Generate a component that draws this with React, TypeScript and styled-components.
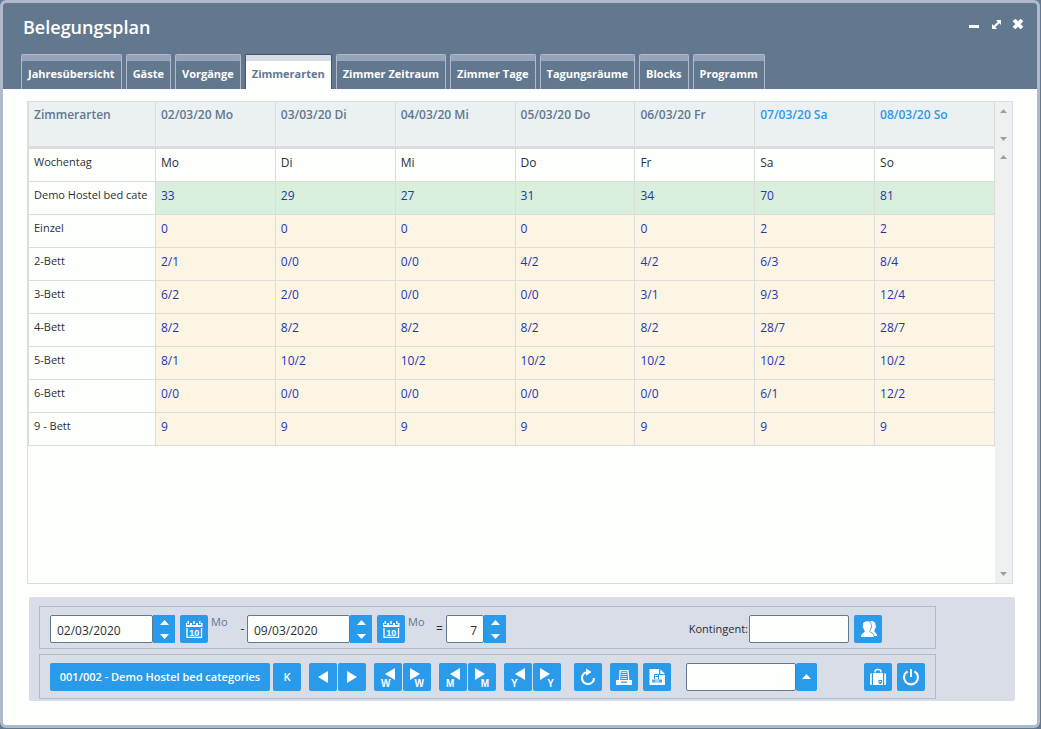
import React from "react";
import styled, { createGlobalStyle } from "styled-components";

const slate = "#62788f";
const frame = "#b1bacd";
const panel = "#d8dde8";
const blue = "#2a9aea";
const paper = "#fdfffd";
const line = "#dadddc";

const GlobalStyle = createGlobalStyle`
  *, *::before, *::after { box-sizing: border-box; }
  body {
    margin: 0;
    background: ${slate};
    font-family: "Trebuchet MS", "Open Sans", "Noto Sans", sans-serif;
    font-size: 12px;
    line-height: 18px;
    color: #2b2f36;
  }
  button, input, select { font: inherit; color: inherit; margin: 0; }
`;

const Window = styled.main`
  display: flex;
  flex-direction: column;
  min-height: calc(100vh - 1px);
  margin: 0 1px 1px 0;
  border: 3px solid ${frame};
  border-radius: 6px;
  background: ${paper};
`;

const Header = styled.header`
  background: ${slate};
  border-radius: 3px 3px 0 0;
`;

const TitleBar = styled.div`
  display: flex;
  justify-content: space-between;
  align-items: flex-start;
  height: 51px;
  padding: 12px 11px 0 20px;
`;

const Title = styled.h1`
  margin: 0;
  font-size: 18px;
  line-height: 24px;
  font-weight: 600;
  color: #fff;
`;

const WindowControls = styled.div`
  display: flex;
  gap: 6px;
`;

const ControlButton = styled.button`
  display: flex;
  width: 16px;
  height: 18px;
  padding: 0;
  border: 0;
  background: none;
  color: #fff;
`;

const Tabs = styled.nav`
  display: flex;
  gap: 4px;
  padding-left: 18px;
`;

const Tab = styled.a<{ $active?: boolean }>`
  display: block;
  height: 35px;
  padding: 4px 6px 0;
  border: 1px solid ${(p) => (p.$active ? "#46566a" : frame)};
  border-bottom: 0;
  border-radius: 2px 2px 0 0;
  background: ${(p) => (p.$active ? paper : slate)};
  box-shadow: inset 0 6px 0 ${(p) => (p.$active ? panel : "#97a3b8")};
  color: ${(p) => (p.$active ? slate : "#fff")};
  font-size: 11px;
  font-weight: 700;
  line-height: 30px;
  text-decoration: none;
  white-space: nowrap;
`;

const GridFrame = styled.section`
  display: flex;
  flex: 1;
  min-height: 483px;
  margin: 12px 24px 13px;
  border: 1px solid ${panel};
`;

const GridArea = styled.div`
  flex: 1;
  min-width: 0;
`;

const Table = styled.table`
  width: 100%;
  table-layout: fixed;
  border-collapse: separate;
  border-spacing: 0;
`;

const HeadCell = styled.th<{ $first?: boolean; $weekend?: boolean }>`
  width: ${(p) => (p.$first ? "128px" : "auto")};
  height: 47px;
  padding: 4px 5px;
  border-right: 1px solid ${line};
  border-bottom: 3px solid ${line};
  border-left: ${(p) => (p.$first ? `1px solid ${line}` : "0")};
  background: #ebf0f3;
  color: ${(p) => (p.$weekend ? blue : slate)};
  font-weight: 600;
  text-align: left;
  vertical-align: top;
  white-space: nowrap;
`;

const RowHead = styled.th`
  height: 33px;
  padding: 4px 3px 4px 5px;
  border: 1px solid ${line};
  border-top: 0;
  font-size: 11px;
  font-weight: 400;
  text-align: left;
  vertical-align: top;
`;

const RowLabel = styled.span`
  display: block;
  overflow: hidden;
  white-space: nowrap;
`;

const tones = { plain: "transparent", green: "#daefdb", cream: "#fdf5e3" };
type Tone = keyof typeof tones;

const Cell = styled.td<{ $tone: Tone }>`
  height: 33px;
  padding: 5px;
  border-right: 1px solid ${line};
  border-bottom: 1px solid ${line};
  background: ${(p) => tones[p.$tone]};
  color: ${(p) => (p.$tone === "plain" ? "inherit" : "#2335b5")};
  vertical-align: top;
`;

const Scrollers = styled.div`
  display: flex;
  flex-direction: column;
  width: 17px;
  background: #eff1f0;
`;

const Scroller = styled.div<{ $fill?: boolean }>`
  display: flex;
  flex-direction: column;
  justify-content: space-between;
  flex: ${(p) => (p.$fill ? "1" : "0 0 46px")};
`;

const ScrollButton = styled.button`
  display: grid;
  place-items: center;
  width: 17px;
  height: 18px;
  padding: 0;
  border: 0;
  background: none;
  color: #9da09f;
`;

const Footer = styled.footer`
  display: flex;
  flex-direction: column;
  gap: 5px;
  margin: 0 22px 24px 26px;
  padding: 9px 79px 2px 10px;
  border-radius: 2px;
  background: ${panel};
`;

const ToolRow = styled.form<{ $height: number; $top?: number }>`
  display: flex;
  align-items: center;
  height: ${(p) => p.$height}px;
  padding: ${(p) => p.$top ?? 0}px 10px 0;
  border: 1px solid ${frame};
  white-space: nowrap;
`;

const Cluster = styled.div<{ $gap?: number; $before?: number }>`
  display: flex;
  align-items: center;
  gap: ${(p) => p.$gap ?? 1}px;
  margin-left: ${(p) => p.$before ?? 0}px;
`;

const PushedCluster = styled(Cluster)<{ $after?: number }>`
  margin-left: auto;
  margin-right: ${(p) => p.$after ?? 0}px;
`;

const Field = styled.input<{ $width: number }>`
  width: ${(p) => p.$width}px;
  height: 28px;
  padding: 2px 6px 0;
  border: 1px solid ${slate};
  border-radius: 2px;
  background: ${paper};
`;

const NumberField = styled(Field)`
  text-align: right;
`;

const FieldLabel = styled.label`
  font-size: 11px;
`;

const Spinner = styled.span`
  display: flex;
  flex-direction: column;
  width: 22px;
  height: 28px;
`;

const SpinButton = styled.button`
  display: grid;
  place-items: center;
  flex: 1;
  padding: 0;
  border: 0;
  background: ${blue};
  color: #fff;
`;

const Button = styled.button<{ $width?: number }>`
  display: flex;
  align-items: center;
  justify-content: center;
  flex: none;
  width: ${(p) => p.$width ?? 28}px;
  height: 28px;
  padding: 0;
  border: 0;
  border-radius: 2px;
  background: ${blue};
  color: #fff;
  font-size: 11px;
  font-weight: 600;
`;

const Weekday = styled.span`
  align-self: flex-start;
  width: 30px;
  padding: 3px 0 0 3px;
  color: ${slate};
  font-size: 11px;
`;

const Sign = styled.span`
  width: 9px;
  text-align: center;
`;

const Group = styled.span`
  display: flex;
`;

const Triangle = ({ down, w = 9 }: { down?: boolean; w?: number }) => (
  <svg width={w} height={w > 8 ? 5 : 4} viewBox="0 0 10 5" preserveAspectRatio="none" aria-hidden="true">
    <path d={down ? "M0 0H10L5 5Z" : "M0 5H10L5 0Z"} fill="currentColor" />
  </svg>
);

const Icon = ({ children }: { children: React.ReactNode }) => (
  <svg width="28" height="28" viewBox="0 0 28 28" fill="currentColor" aria-hidden="true">
    {children}
  </svg>
);

const CalendarIcon = () => (
  <Icon>
    <path d="M6 8h1v2h3V8h2v2h4V8h2v2h3V8h1.500v4H6z" />
    <path d="M7.500 6h1.500v3H7.500zM13.200 6h1.500v3h-1.500zM19 6h1.500v3H19z" />
    <path d="M7 13V22.300H21.500V13" fill="none" stroke="currentColor" strokeWidth="1.300" />
    <text x="14.200" y="20.500" fontSize="9" fontWeight="700" textAnchor="middle" fontFamily="Liberation Sans, sans-serif">10</text>
  </Icon>
);

const ArrowIcon = ({ back, letter }: { back?: boolean; letter?: string }) => {
  const x = letter ? (back ? 11 : 7) : 9;
  const y = letter ? 5 : 8;
  return (
    <Icon>
      <path d={back ? `M${x + 10} ${y}v12l-10-6z` : `M${x} ${y}v12l10-6z`} />
      {letter && (
        <text x={back ? 7 : 21} y="24" textAnchor={back ? "start" : "end"} fontSize="10" fontWeight="700" fontFamily="Liberation Sans, sans-serif">
          {letter}
        </text>
      )}
    </Icon>
  );
};

const ReloadIcon = () => (
  <Icon>
    <path d="M12.500 9.200A6 6 0 1 0 20 15" fill="none" stroke="currentColor" strokeWidth="2.200" />
    <path d="M12 5.500L17.500 9L12 12.800z" />
  </Icon>
);

const PrinterIcon = () => (
  <Icon>
    <path d="M9.500 17L10.200 7.600H18L18.700 17" fill="none" stroke="currentColor" strokeWidth="1.300" />
    <path d="M11.500 9.500h5.200M11.500 11.500h5.200M11.300 13.500h5.600M11 15.500h6" stroke="currentColor" strokeWidth="1" opacity=".8" />
    <path fillRule="evenodd" d="M6 17h16v4q0 1-1 1H7q-1 0-1-1zM11 18.500v1.300h6v-1.300z" />
  </Icon>
);

const PrintPageIcon = () => (
  <Icon>
    <path d="M6.500 6H16V12h6v10H6.500z" />
    <path d="M17.300 6.300L22 11H17.300z" />
    <path d="M11.500 16V11.500h4V16" fill="none" stroke={blue} strokeWidth="1" />
    <path d="M12.500 13.500h3" stroke={blue} />
    <path d="M9 16.500h10v3H9z" fill={blue} opacity=".85" />
    <path d="M12 18h4" stroke="currentColor" />
  </Icon>
);

const PeopleIcon = () => (
  <Icon>
    <path d="M15 6.200C18.500 5.200 22 6.500 21.500 10.500C22.500 11.500 21.700 13 21 13.500C20.800 15 20.300 15.500 20.300 16.300C20.500 18 23 17.500 23 21H16z" />
    <path
      d="M12.500 6.200C15.500 6 17.200 7.500 17 10.500C17.900 11.200 17.300 12.800 16.500 13.300C16.200 14.700 15.700 15.300 15.300 16C15.500 18.300 20 17.800 19.800 22H7C7 18 10.700 18.300 10.800 16C10.200 15.300 9.700 14.500 9.500 13.300C8.500 12.500 8.300 11.300 9 10.500C8.700 8 9.800 6.500 12.500 6.200z"
      stroke={blue}
      strokeWidth="1.400"
      paintOrder="stroke"
    />
  </Icon>
);

const SuitcaseIcon = () => (
  <Icon>
    <path d="M11 9.500V8.500Q11 6.500 14 6.500T17 8.500V9.500" fill="none" stroke="currentColor" strokeWidth="1.400" />
    <path d="M6 10.500h1.800V22H7Q6 22 6 21zM9 10h10v12H9zM20.200 10.500H22V21q0 1-1 1h-.8z" />
    <path d="M14.500 17h3.500v2q0 1.800-1.800 2q-1.700-.2-1.700-2z" fill={blue} />
    <path d="M15.500 18.500h1.500" stroke="currentColor" />
  </Icon>
);

const PowerIcon = () => (
  <Icon>
    <path d="M10.500 8.300A7 7 0 1 0 17.500 8.300" fill="none" stroke="currentColor" strokeWidth="2.100" />
    <path d="M13 6h2v8h-2z" />
  </Icon>
);

const tabs = [
  "Jahresübersicht", "Gäste", "Vorgänge", "Zimmerarten", "Zimmer Zeitraum",
  "Zimmer Tage", "Tagungsräume", "Blocks", "Programm",
];

const days = ["02/03/20 Mo", "03/03/20 Di", "04/03/20 Mi", "05/03/20 Do", "06/03/20 Fr", "07/03/20 Sa", "08/03/20 So"];

const rows: { label: string; tone: Tone; values: string[] }[] = [
  { label: "Wochentag", tone: "plain", values: ["Mo", "Di", "Mi", "Do", "Fr", "Sa", "So"] },
  { label: "Demo Hostel bed cate", tone: "green", values: ["33", "29", "27", "31", "34", "70", "81"] },
  { label: "Einzel", tone: "cream", values: ["0", "0", "0", "0", "0", "2", "2"] },
  { label: "2-Bett", tone: "cream", values: ["2/1", "0/0", "0/0", "4/2", "4/2", "6/3", "8/4"] },
  { label: "3-Bett", tone: "cream", values: ["6/2", "2/0", "0/0", "0/0", "3/1", "9/3", "12/4"] },
  { label: "4-Bett", tone: "cream", values: ["8/2", "8/2", "8/2", "8/2", "8/2", "28/7", "28/7"] },
  { label: "5-Bett", tone: "cream", values: ["8/1", "10/2", "10/2", "10/2", "10/2", "10/2", "10/2"] },
  { label: "6-Bett", tone: "cream", values: ["0/0", "0/0", "0/0", "0/0", "0/0", "6/1", "12/2"] },
  { label: "9 - Bett", tone: "cream", values: ["9", "9", "9", "9", "9", "9", "9"] },
];

const SpinPair = ({ label }: { label: string }) => (
  <Spinner>
    <SpinButton type="button" aria-label={`${label} erhöhen`}><Triangle /></SpinButton>
    <SpinButton type="button" aria-label={`${label} verringern`}><Triangle down /></SpinButton>
  </Spinner>
);

const DateControl = ({ label, value, weekday }: { label: string; value: string; weekday: string }) => (
  <>
    <Group>
      <Field $width={103} aria-label={label} defaultValue={value} />
      <SpinPair label={label} />
    </Group>
    <Cluster $before={5}>
      <Button type="button" aria-label={`${label} im Kalender wählen`}><CalendarIcon /></Button>
    </Cluster>
    <Weekday>{weekday}</Weekday>
  </>
);

const steps = [
  { letter: undefined, name: "Tag" },
  { letter: "W", name: "Woche" },
  { letter: "M", name: "Monat" },
  { letter: "Y", name: "Jahr" },
];

export default function App() {
  return (
    <>
      <GlobalStyle />
      <Window>
        <Header>
          <TitleBar>
            <Title>Belegungsplan</Title>
            <WindowControls>
              <ControlButton type="button" aria-label="Minimieren">
                <svg width="16" height="18" viewBox="0 0 16 18"><path d="M3 10h10v3H3z" fill="#fff" /></svg>
              </ControlButton>
              <ControlButton type="button" aria-label="Maximieren">
                <svg width="16" height="18" viewBox="0 0 16 18">
                  <path d="M8 5h5v5l-1.700-1.700-4 4L9 14H4V9l1.700 1.700 4-4z" fill="#fff" />
                </svg>
              </ControlButton>
              <ControlButton type="button" aria-label="Schließen">
                <svg width="16" height="18" viewBox="0 0 16 18">
                  <path d="M4 5l8 8M12 5l-8 8" stroke="#fff" strokeWidth="3.800" />
                </svg>
              </ControlButton>
            </WindowControls>
          </TitleBar>
          <Tabs>
            {tabs.map((t) => (
              <Tab key={t} href="#" $active={t === "Zimmerarten"}>{t}</Tab>
            ))}
          </Tabs>
        </Header>

        <GridFrame>
          <GridArea>
            <Table>
              <thead>
                <tr>
                  <HeadCell $first scope="col">Zimmerarten</HeadCell>
                  {days.map((d, i) => (
                    <HeadCell key={d} scope="col" $weekend={i > 4}>{d}</HeadCell>
                  ))}
                </tr>
              </thead>
              <tbody>
                {rows.map((r) => (
                  <tr key={r.label}>
                    <RowHead scope="row"><RowLabel>{r.label}</RowLabel></RowHead>
                    {r.values.map((v, i) => (
                      <Cell key={i} $tone={r.tone}>{v}</Cell>
                    ))}
                  </tr>
                ))}
              </tbody>
            </Table>
          </GridArea>
          <Scrollers>
            <Scroller>
              <ScrollButton type="button" aria-label="Kopf nach oben"><Triangle w={7} /></ScrollButton>
              <ScrollButton type="button" aria-label="Kopf nach unten"><Triangle w={7} down /></ScrollButton>
            </Scroller>
            <Scroller $fill>
              <ScrollButton type="button" aria-label="Nach oben"><Triangle w={7} /></ScrollButton>
              <ScrollButton type="button" aria-label="Nach unten"><Triangle w={7} down /></ScrollButton>
            </Scroller>
          </Scrollers>
        </GridFrame>

        <Footer>
          <ToolRow $height={43} $top={3}>
            <DateControl label="Von" value="02/03/2020" weekday="Mo" />
            <Sign>-</Sign>
            <DateControl label="Bis" value="09/03/2020" weekday="Mo" />
            <Sign>=</Sign>
            <Cluster $before={2} $gap={0}>
              <NumberField $width={38} aria-label="Anzahl Tage" defaultValue="7" />
              <SpinPair label="Anzahl Tage" />
            </Cluster>
            <PushedCluster $gap={1} $after={43}>
              <FieldLabel htmlFor="kontingent">Kontingent:</FieldLabel>
              <Field id="kontingent" $width={100} />
              <Cluster $before={4}>
                <Button type="button" aria-label="Kontingente"><PeopleIcon /></Button>
              </Cluster>
            </PushedCluster>
          </ToolRow>
          <ToolRow $height={45}>
            <Cluster $gap={3}>
              <Button type="button" $width={220}>001/002 - Demo Hostel bed categories</Button>
              <Button type="button">K</Button>
            </Cluster>
            {steps.map((s) => (
              <Cluster key={s.name} $before={8}>
                <Button type="button" aria-label={`${s.name} zurück`}><ArrowIcon back letter={s.letter} /></Button>
                <Button type="button" aria-label={`${s.name} vor`}><ArrowIcon letter={s.letter} /></Button>
              </Cluster>
            ))}
            <Cluster $before={13}>
              <Button type="button" aria-label="Aktualisieren"><ReloadIcon /></Button>
            </Cluster>
            <Cluster $before={8} $gap={5}>
              <Button type="button" aria-label="Drucken"><PrinterIcon /></Button>
              <Button type="button" aria-label="Seite drucken"><PrintPageIcon /></Button>
            </Cluster>
            <Cluster $before={15} $gap={0}>
              <Field $width={110} aria-label="Auswahl" />
              <Button type="button" $width={21} aria-label="Auswahl öffnen"><Triangle /></Button>
            </Cluster>
            <PushedCluster $gap={5}>
              <Button type="button" aria-label="Gepäck"><SuitcaseIcon /></Button>
              <Button type="button" aria-label="Beenden"><PowerIcon /></Button>
            </PushedCluster>
          </ToolRow>
        </Footer>
      </Window>
    </>
  );
}
